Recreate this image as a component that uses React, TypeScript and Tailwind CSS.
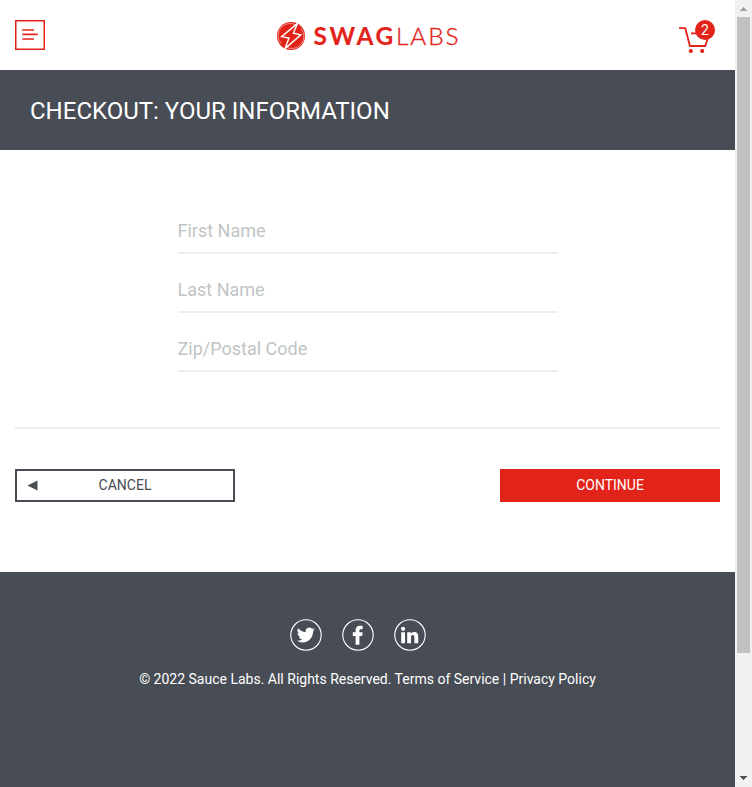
import React from "react";

function Logo() {
  return (
    <svg width="184" height="30" viewBox="276 21 184 30" role="img" aria-label="Swag Labs">
      <circle cx="291" cy="36" r="14" fill="#e2231a" />
      <path
        d="M296.500 25.300A12 12 0 0 0 281.200 43.500M285.500 46.700A12 12 0 0 0 300.800 28.500"
        fill="none"
        stroke="#fff"
        strokeWidth="0.8"
        strokeOpacity="0.6"
      />
      <path
        d="M297.500 23.400L281.600 36.600L289 38L285 48.600L300.800 34.800L293.400 33.200Z"
        fill="#e2231a"
        stroke="#fff"
        strokeWidth="1.400"
      />
      <text x="313.600" y="45" fill="#e2231a" stroke="#e2231a" strokeWidth="0.150" fontFamily="Lato" fontWeight="700" fontSize="24.400" textLength="79.500" lengthAdjust="spacing">SWAG</text>
      <text x="396" y="45" fill="#e2231a" stroke="#e2231a" strokeWidth="0.350" fontFamily="Lato" fontWeight="300" fontSize="24.400" textLength="62.600" lengthAdjust="spacing">LABS</text>
    </svg>
  );
}

function MenuButton() {
  return (
    <button aria-label="Open menu" className="h-[30px] w-[30px]">
      <svg width="30" height="30" viewBox="0 0 30 30" fill="#e2231a">
        <path d="M0 0H30V30H0ZM1.5 1.5V28.5H28.5V1.5Z" fillRule="evenodd" />
        <path d="M7.3 9.2H19V10.8H7.3ZM7.3 13.500H22.700V15.200H7.300ZM7.300 18.200H19V19.800H7.300Z" />
      </svg>
    </button>
  );
}

function Cart() {
  return (
    <a className="relative block h-[40px] w-[40px]" aria-label="Cart">
      <svg width="40" height="40" viewBox="0 0 40 40" fill="none" stroke="#e2231a" strokeWidth="1.8">
        <path d="M4 13.200H10.300L14.900 31H30.200L34.500 18.300H16" />
        <circle cx="15.800" cy="36" r="2.100" fill="#e2231a" stroke="none" />
        <circle cx="27.200" cy="36" r="2.100" fill="#e2231a" stroke="none" />
      </svg>
      <span className="absolute top-[5px] right-0 flex h-5 w-5 items-center justify-center rounded-full bg-[#e2231a] text-[14px] leading-5 text-white">
        2
      </span>
    </a>
  );
}

const socials = [
  {
    name: "Twitter",
    path: "M24.800 10.400a7.400 7.400 0 0 1-2.100.6 3.700 3.700 0 0 0 1.600-2.100 7.400 7.400 0 0 1-2.300.9 3.700 3.700 0 0 0-6.300 3.400 10.500 10.500 0 0 1-7.600-3.900 3.700 3.700 0 0 0 1.100 5 3.700 3.700 0 0 1-1.700-.4c0 1.800 1.300 3.300 3 3.700a3.700 3.700 0 0 1-1.700.1 3.700 3.700 0 0 0 3.500 2.500 7.400 7.400 0 0 1-5.500 1.600 10.500 10.500 0 0 0 5.700 1.700c6.700 0 10.500-5.700 10.500-10.500v-.5a7.400 7.400 0 0 0 1.800-2z",
  },
  {
    name: "Facebook",
    path: "M13.600 25.800V16.900H10.800V13.300H13.600V11.200C13.600 8.400 15.200 6.800 17.800 6.800H20.600V10.200H18.800C17.800 10.200 17.400 10.700 17.400 11.600V13.300H20.600L20.200 16.900H17.400V25.800Z",
  },
  {
    name: "LinkedIn",
    path: "M7.200 13.200H11V24.200H7.200ZM9.100 7.700a2.100 2.100 0 1 1 0 4.200 2.100 2.100 0 0 1 0-4.200ZM13.200 13.200H16.800V14.700C17.300 13.800 18.500 12.900 20.200 12.900 23.500 12.900 24.200 15 24.200 18V24.200H20.400V18.700C20.400 17.400 20.300 16 18.700 16 17.200 16 17 17.300 17 18.600V24.200H13.200Z",
  },
];

function Scrollbar() {
  return (
    <div className="flex h-[787px] w-[17px] flex-col items-start bg-[#f1f1f1]">
      <svg width="17" height="17" fill="#a3a3a3" shapeRendering="crispEdges">
        <path d="M5 11L8.500 7L12 11Z" />
      </svg>
      <div className="ml-[2px] h-[636px] w-[13px] bg-[#c1c1c1]" />
      <svg className="mt-auto" width="17" height="17" fill="#505050" shapeRendering="crispEdges">
        <path d="M5 6H12L8.500 10Z" />
      </svg>
    </div>
  );
}

export default function App() {
  return (
    <div className="flex h-[787px] w-[752px] overflow-hidden bg-white font-[Roboto,sans-serif]">
      <div className="flex w-[735px] flex-col">
        <header className="grid h-[70px] grid-cols-[1fr_auto_1fr] items-start">
          <div className="pt-5 pl-[15px]">
            <MenuButton />
          </div>
          <div className="pt-[21px]">
            <Logo />
          </div>
          <div className="flex justify-end pt-[15px] pr-5">
            <Cart />
          </div>
        </header>
        <div className="flex h-20 items-center bg-[#474c55] pt-[2px] pl-[30px]">
          <h1 className="text-[24px] leading-8 text-white uppercase">Checkout: Your Information</h1>
        </div>
        <main className="flex h-[422px] flex-col px-[15px]">
          <form className="mx-auto flex w-[380px] flex-col gap-3 pt-[57px]">
            {["First Name", "Last Name", "Zip/Postal Code"].map((label) => (
              <input
                key={label}
                placeholder={label}
                className="h-[47px] w-full border-b-2 border-[#ededed] pt-[2px] text-[18px] outline-none placeholder:text-[#bfc5c5]"
              />
            ))}
          </form>
          <div className="mt-[55px] flex justify-between border-t-2 border-[#ededed] pt-10">
            <button className="flex h-[33px] w-[220px] items-center border-2 border-[#474c55] text-[14px] text-[#474c55]">
              <svg className="ml-[10px]" width="11" height="11" fill="#474c55">
                <path d="M.500 5.500L10.500 .5V10.500Z" />
              </svg>
              <span className="flex-1 pr-[21px] text-center">CANCEL</span>
            </button>
            <button className="h-[33px] w-[220px] bg-[#e2231a] text-[14px] text-white">CONTINUE</button>
          </div>
        </main>
        <footer className="flex flex-1 flex-col items-center bg-[#474c55] pt-[47px] text-white">
          <ul className="mr-[19px] flex gap-5">
            {socials.map((s) => (
              <li key={s.name} className="h-8 w-8">
                <svg width="32" height="32" viewBox="0 0 32 32" fill="#fff" aria-label={s.name}>
                  <circle cx="16" cy="16" r="15.200" fill="none" stroke="#fff" strokeWidth="1.100" />
                  <path d={s.path} />
                </svg>
              </li>
            ))}
          </ul>
          <p className="mt-[18px] text-[14px] leading-5">
            © 2022 Sauce Labs. All Rights Reserved. Terms of Service | Privacy Policy
          </p>
        </footer>
      </div>
      <Scrollbar />
    </div>
  );
}
